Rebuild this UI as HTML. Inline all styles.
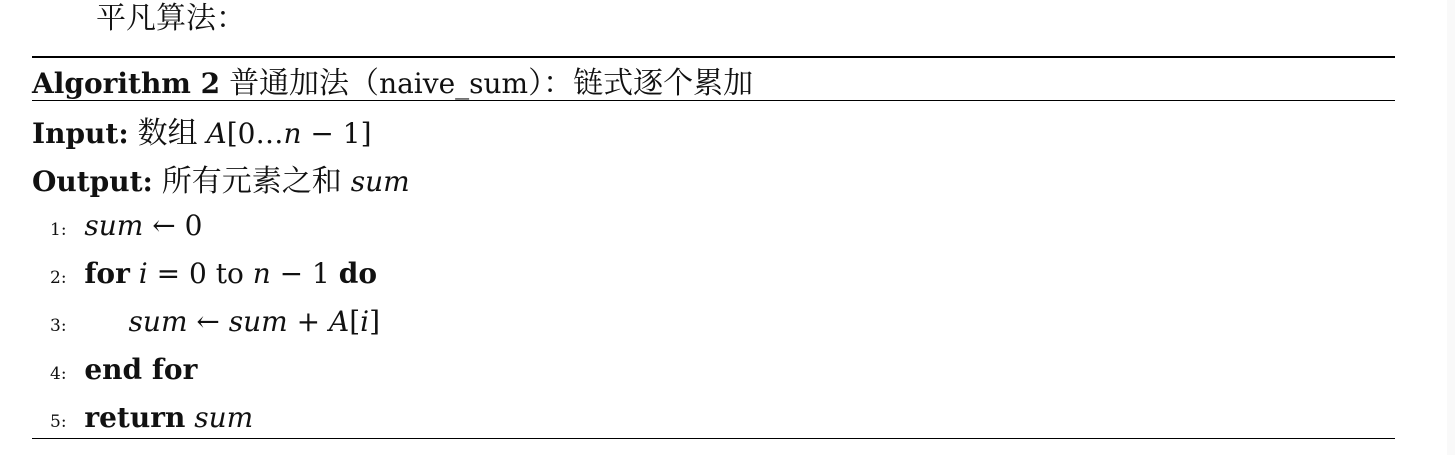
<!DOCTYPE html>
<html><head><meta charset="utf-8"><style>
body{margin:0;width:1455px;height:455px;background:#fff;position:relative;overflow:hidden;font-family:"DejaVu Serif","Noto Serif CJK SC",serif;color:#111}
.t{position:absolute;white-space:nowrap;font-size:28px;line-height:27px}
.r{position:absolute;left:32px;width:1363px;background:#000}
b{font-weight:bold}
i{font-style:italic}
.n{font-size:17px}
.cj{font-family:"Noto Serif CJK SC","Noto Sans CJK SC",serif;font-size:30px;line-height:27px}
.strip{position:absolute;left:1447px;top:0;width:8px;height:455px;background:#f9f9f9}
</style></head><body>
<div class="strip"></div>
<div class="t" style="left:96px;top:2px"><span class="cj">平凡算法：</span></div>
<div class="r" style="top:56px;height:2px"></div>
<div class="t" style="left:32px;top:67px"><b>Algorithm 2</b> <span class="cj">普通加法（</span>naive_sum<span class="cj">）：链式逐个累加</span></div>
<div class="r" style="top:100px;height:1px"></div>
<div class="t" style="left:32px;top:117px"><b>Input:</b> <span class="cj">数组</span> <i>A</i>[0…<i>n</i> − 1]</div>
<div class="t" style="left:32px;top:165px"><b>Output:</b> <span class="cj">所有元素之和</span> <i>sum</i></div>
<div class="t" style="left:50px;top:212px"><span class="n">1:</span>&nbsp; <i>sum</i> ← 0</div>
<div class="t" style="left:50px;top:260px"><span class="n">2:</span>&nbsp; <b>for</b> <i>i</i> = 0 to <i>n</i> − 1 <b>do</b></div>
<div class="t" style="left:50px;top:308px"><span class="n">3:</span><span style="display:inline-block;width:62px"></span><i>sum</i> ← <i>sum</i> + <i>A</i>[<i>i</i>]</div>
<div class="t" style="left:50px;top:356px"><span class="n">4:</span>&nbsp; <b>end for</b></div>
<div class="t" style="left:50px;top:404px"><span class="n">5:</span>&nbsp; <b>return</b> <i>sum</i></div>
<div class="r" style="top:438px;height:1px"></div>
</body></html>
